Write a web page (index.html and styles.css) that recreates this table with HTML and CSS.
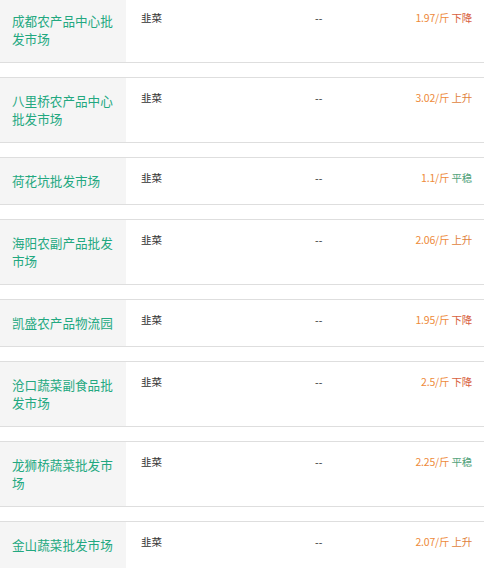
FILE: index.html
```html
<!DOCTYPE html>
<html lang="zh-CN">
<head>
<meta charset="utf-8">
<title>韭菜价格</title>
<link rel="stylesheet" href="styles.css">
</head>
<body>
<div class="list">
  <div class="row">
    <div class="name">成都农产品中心批发市场</div>
    <div class="item">韭菜</div>
    <div class="dash">--</div>
    <div class="price">1.97/斤 <span class="down">下降</span></div>
  </div>
  <div class="row">
    <div class="name">八里桥农产品中心批发市场</div>
    <div class="item">韭菜</div>
    <div class="dash">--</div>
    <div class="price">3.02/斤 <span class="up">上升</span></div>
  </div>
  <div class="row">
    <div class="name">荷花坑批发市场</div>
    <div class="item">韭菜</div>
    <div class="dash">--</div>
    <div class="price">1.1/斤 <span class="flat">平稳</span></div>
  </div>
  <div class="row">
    <div class="name">海阳农副产品批发市场</div>
    <div class="item">韭菜</div>
    <div class="dash">--</div>
    <div class="price">2.06/斤 <span class="up">上升</span></div>
  </div>
  <div class="row">
    <div class="name">凯盛农产品物流园</div>
    <div class="item">韭菜</div>
    <div class="dash">--</div>
    <div class="price">1.95/斤 <span class="down">下降</span></div>
  </div>
  <div class="row">
    <div class="name">沧口蔬菜副食品批发市场</div>
    <div class="item">韭菜</div>
    <div class="dash">--</div>
    <div class="price">2.5/斤 <span class="down">下降</span></div>
  </div>
  <div class="row">
    <div class="name">龙狮桥蔬菜批发市场</div>
    <div class="item">韭菜</div>
    <div class="dash">--</div>
    <div class="price">2.25/斤 <span class="flat">平稳</span></div>
  </div>
  <div class="row">
    <div class="name">金山蔬菜批发市场</div>
    <div class="item">韭菜</div>
    <div class="dash">--</div>
    <div class="price">2.07/斤 <span class="up">上升</span></div>
  </div>
</div>
</body>
</html>
```

FILE: styles.css
```css
* { box-sizing: border-box; }
html, body {
  margin: 0;
  padding: 0;
  background: #fff;
}
body {
  font-family: "Noto Sans CJK SC", "Noto Sans", sans-serif;
  color: #333;
}
.list {
  margin-top: -3px;
  display: flex;
  flex-direction: column;
  gap: 14px;
}
.row {
  display: flex;
  align-items: stretch;
  border-top: 1px solid #dedede;
  border-bottom: 1px solid #dedede;
}
.name {
  width: 126px;
  flex: none;
  background: #f5f5f5;
  color: #22a880;
  font-size: 12.6px;
  line-height: 18px;
  padding: 14px 12px;
  display: flex;
  align-items: center;
}
.item {
  width: 189px;
  flex: none;
  padding: 11px 0 0 15px;
  font-size: 10.5px;
  line-height: 18px;
  color: #333;
}
.dash {
  flex: 1;
  padding-top: 11px;
  font-size: 10.5px;
  line-height: 18px;
  color: #333;
}
.price {
  padding: 11px 12px 0 0;
  font-size: 10.5px;
  line-height: 18px;
  color: #ee8a3a;
  text-align: right;
  white-space: nowrap;
  letter-spacing: -0.2px;
}
.down { color: #d8603e; }
.up { color: #df7f3c; }
.flat { color: #52a27a; }
```
